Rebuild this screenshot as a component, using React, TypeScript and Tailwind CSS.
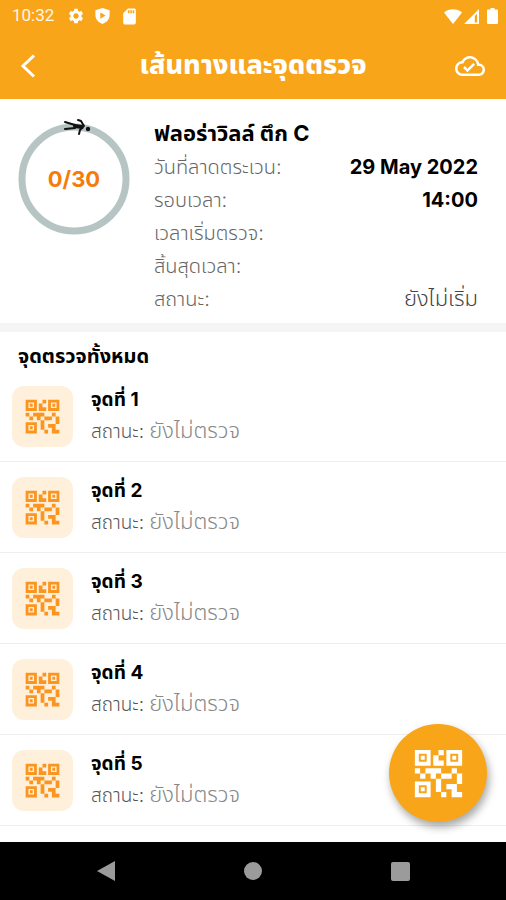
import { MdOutlineCloudDone, MdQrCode2, MdSdCard, MdSettings } from "react-icons/md";

const details = [
  { label: "วันที่ลาดตระเวน:", value: "29 May 2022", strong: true },
  { label: "รอบเวลา:", value: "14:00", strong: true },
  { label: "เวลาเริ่มตรวจ:", value: "", strong: false },
  { label: "สิ้นสุดเวลา:", value: "", strong: false },
  { label: "สถานะ:", value: "ยังไม่เริ่ม", strong: false },
];

const checkpoints = [1, 2, 3, 4, 5];

function StatusBar() {
  return (
    <div className="flex h-8 items-center justify-between pr-2 pl-3 font-[Roboto,sans-serif] text-base">
      <div className="flex items-center">
        <span className="w-[55px] text-[17px] text-white/90">10:32</span>
        <MdSettings className="size-[18px]" />
        <svg viewBox="0 0 16 18" className="ml-2.5 h-4 w-[15px]" aria-hidden="true">
          <path fill="currentColor" fillRule="evenodd" d="M8 0 16 2.5V8C16 13 12.500 16.500 8 18 3.500 16.500 0 13 0 8V2.500ZM5.500 5V12L11.500 8.500Z" />
        </svg>
        <MdSdCard className="ml-2.5 size-[19px]" />
      </div>
      <div className="flex items-center">
        <svg viewBox="0 0 18 15" className="h-[15px] w-[18px]" aria-hidden="true">
          <path fill="currentColor" d="M9 15 0 3.500C5-.8 13-.8 18 3.500Z" />
        </svg>
        <svg viewBox="0 0 16 16" className="ml-0.5 size-[15px]" aria-hidden="true">
          <path fill="currentColor" fillRule="evenodd" d="M0 16 16 0V16ZM11.500 7.500V14.500H14V5Z" />
        </svg>
        <svg viewBox="0 0 11 16" className="ml-2 h-4 w-[11px]" aria-hidden="true">
          <path fill="currentColor" d="M3.500 0H7.500V1.500H10Q11 1.500 11 2.500V15Q11 16 10 16H1Q0 16 0 15V2.500Q0 1.500 1 1.500H3.500Z" />
        </svg>
      </div>
    </div>
  );
}

function ProgressRing() {
  return (
    <div className="grid w-[112px] shrink-0 place-items-center">
      <svg viewBox="0 0 112 124" className="col-start-1 row-start-1 h-[124px] w-[112px]" aria-hidden="true">
        <circle cx="56" cy="62" r="52" fill="none" stroke="#b6c4c4" strokeWidth="7" />
        <g fill="none" stroke="#111" strokeWidth="2" strokeLinecap="round" strokeLinejoin="round">
          <path d="M47 5 57 8M47 12 57 11M60 3 63 4 66 9M61 17 62 13 64 11" />
          <path strokeWidth="4" d="M57 9 64 10" />
        </g>
        <circle cx="70" cy="12" r="2.200" fill="#111" />
      </svg>
      <span className="col-start-1 row-start-1 text-[22px] font-bold text-[#f57c0a]">0/30</span>
    </div>
  );
}

export default function App() {
  return (
    <div className="flex min-h-screen flex-col bg-white font-[Inter,'Noto_Sans_Thai',sans-serif] text-black">
      <header className="bg-[#f9a51a] text-white">
        <StatusBar />
        <div className="flex h-[67px] items-center justify-between px-5">
          <button type="button" aria-label="ย้อนกลับ" className="flex w-8 items-center">
            <svg viewBox="0 0 16 24" className="h-6 w-4" fill="none" stroke="currentColor" strokeWidth="3" aria-hidden="true">
              <path d="M14 1.500 3 12 14 22.500" />
            </svg>
          </button>
          <h1 className="text-[27px] font-extrabold whitespace-nowrap">เส้นทางและจุดตรวจ</h1>
          <button type="button" aria-label="ซิงค์แล้ว" className="flex w-8 justify-center">
            <MdOutlineCloudDone className="size-[30px]" />
          </button>
        </div>
      </header>

      <main className="grow">
        <section className="flex items-start gap-6 border-b-[9px] border-[#f5f5f5] pt-[18px] pr-7 pb-2 pl-[18px]">
          <ProgressRing />
          <div className="grow">
            <h2 className="h-[33px] text-[22px] leading-[33px] font-bold">ฟลอร่าวิลล์ ตึก C</h2>
            <dl>
              {details.map((item) => (
                <div key={item.label} className="flex h-[33px] items-center justify-between">
                  <dt className="text-xl font-light text-[#666]">{item.label}</dt>
                  <dd className={item.strong ? "text-xl font-bold" : "text-[22px] font-light text-[#444]"}>{item.value}</dd>
                </div>
              ))}
            </dl>
          </div>
        </section>

        <section>
          <h2 className="h-[39px] px-[18px] pt-2 text-xl leading-8 font-bold">จุดตรวจทั้งหมด</h2>
          <ul>
            {checkpoints.map((n) => (
              <li key={n} className="flex h-[91px] items-center gap-[18px] border-b border-[#eee] px-3">
                <div className="grid size-[61px] shrink-0 place-items-center rounded-xl bg-[#fff0dc] text-[#fb9520]">
                  <MdQrCode2 className="size-[45px]" />
                </div>
                <div>
                  <h3 className="text-[19px] leading-[30px] font-bold">จุดที่ {n}</h3>
                  <p className="text-[19px] leading-[30px] font-light text-[#555]">
                    สถานะ: <span className="text-[22px] text-[#888]">ยังไม่ตรวจ</span>
                  </p>
                </div>
              </li>
            ))}
          </ul>
        </section>
      </main>

      <button
        type="button"
        aria-label="สแกนคิวอาร์โค้ด"
        className="fixed right-[19px] bottom-[78px] grid size-[98px] place-items-center rounded-full bg-[#f9a51a] text-white shadow-[2px_5px_9px_rgba(0,0,0,0.35)]"
      >
        <MdQrCode2 className="size-[63px]" />
      </button>

      <nav className="sticky bottom-0 flex h-[58px] items-center justify-around bg-black px-8 text-[#9b9b9b]">
        <button type="button" aria-label="กลับ">
          <svg viewBox="0 0 20 20" className="size-5" aria-hidden="true"><path fill="currentColor" d="M19 0V20L1 10Z" /></svg>
        </button>
        <button type="button" aria-label="หน้าหลัก" className="size-[18px] rounded-full bg-current" />
        <button type="button" aria-label="แอปล่าสุด" className="size-[19px] rounded-xs bg-current" />
      </nav>
    </div>
  );
}
